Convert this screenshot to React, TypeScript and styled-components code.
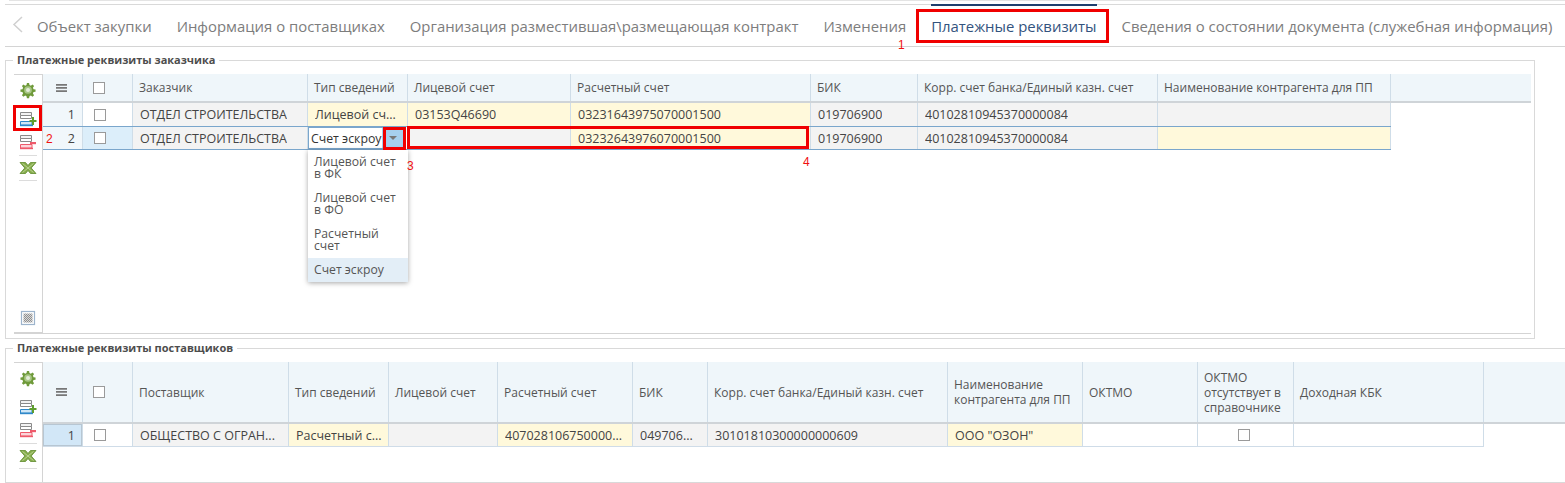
import styled, { createGlobalStyle } from "styled-components";

const GlobalStyle = createGlobalStyle`
  html, body {
    margin: 0;
    padding: 0;
    background: #fff;
    overflow: hidden;
  }
  body {
    font-family: "Open Sans", "Noto Sans", sans-serif;
    color: #444;
  }
`;

const Page = styled.div`
  position: relative;
  width: 1565px;
  height: 483px;
  overflow: hidden;
`;

const TopRule = styled.div`
  height: 4px;
  margin-left: 5px;
  border-bottom: 1px solid #d9d9d9;

  &::before {
    content: "";
    display: block;
    height: 1px;
    margin-left: 4px;
    background: #e4e4e4;
  }
`;

const TabBar = styled.div`
  display: flex;
  align-items: center;
  height: 41px;
  margin-left: 5px;
  padding-left: 7px;
  border-bottom: 1px solid #d4d4d4;
`;

const Chevron = styled.svg`
  flex: none;
  width: 12px;
  height: 17px;
  margin-right: 13px;
  margin-top: -2px;
`;

const Tab = styled.div<{ $active?: boolean }>`
  position: relative;
  flex: none;
  margin-right: 25px;
  font-size: 14.9px;
  line-height: 20px;
  white-space: nowrap;
  color: ${(p) => (p.$active ? "#33537e" : "#7d7d7d")};

  &::before {
    content: "";
    display: ${(p) => (p.$active ? "block" : "none")};
    position: absolute;
    left: 0;
    right: 0;
    top: -12px;
    height: 2px;
    background: #1f3f6e;
  }
`;

const Section = styled.fieldset<{ $width: number; $height: number; $top: number; $flush?: boolean }>`
  box-sizing: border-box;
  width: ${(p) => p.$width}px;
  height: ${(p) => p.$height}px;
  margin: ${(p) => p.$top}px 0 0 5px;
  padding: 7px 3px ${(p) => (p.$flush ? 0 : 4)}px 8px;
  border: 1px solid #d9d9d9;
  min-width: 0;
`;

const Legend = styled.legend`
  margin-left: -1px;
  padding: 0 4px;
  font-size: 11px;
  line-height: 14px;
  font-weight: 700;
  color: #4d4d4d;
`;

const Panel = styled.div`
  display: flex;
  height: 100%;
`;

const Toolbar = styled.div<{ $flush?: boolean }>`
  box-sizing: border-box;
  flex: 0 0 29px;
  display: flex;
  flex-direction: column;
  align-items: center;
  padding: 5px 0 4px;
  border-top: 1px solid #d4d4d4;
  border-right: 1px solid #d4d4d4;
  border-bottom: ${(p) => (p.$flush ? "none" : "2px solid #d4d4d4")};
`;

const ToolIcon = styled.svg<{ $gap?: number }>`
  flex: 0 0 20px;
  display: block;
  width: 20px;
  height: 20px;
  margin-bottom: ${(p) => p.$gap ?? 3}px;
`;

const ToolDivider = styled.div`
  flex: 0 0 1px;
  width: 18px;
  margin-bottom: 2px;
  background: #dcdcdc;
`;

const ToolSpacer = styled.div`
  flex: 1;
`;

const GridArea = styled.div<{ $flush?: boolean }>`
  flex: 1;
  min-width: 0;
  border-bottom: ${(p) => (p.$flush ? "none" : "1px solid #d4d4d4")};
`;

const Row = styled.div<{ $cols: string; $height: number; $line?: string }>`
  display: grid;
  grid-template-columns: ${(p) => p.$cols};
  width: fit-content;
  height: ${(p) => p.$height}px;
  box-sizing: border-box;
  border-bottom: 1px solid ${(p) => p.$line ?? "#cfdce8"};
`;

const HeaderRow = styled(Row)`
  width: auto;
  border-bottom: 2px solid #cfd4d8;
  background: #eff6fa;
`;

const HeaderCell = styled.div<{ $center?: boolean; $pad?: number }>`
  box-sizing: border-box;
  display: flex;
  align-items: center;
  justify-content: ${(p) => (p.$center ? "center" : "flex-start")};
  padding: 0 3px 0 ${(p) => p.$pad ?? (p.$center ? 0 : 6)}px;
  border-right: 1px solid #cfdde8;
  font-size: 12px;
  line-height: 15px;
  color: #555;
  min-width: 0;
`;

const tones = {
  white: "#ffffff",
  gray: "#f3f3f3",
  yellow: "#fff9db",
  index: "#f1f7fb",
  selected: "#dceefa",
  current: "#d2e7f7",
};

type Tone = keyof typeof tones;

const Cell = styled.div<{ $tone: Tone; $number?: boolean; $center?: boolean; $pad?: number }>`
  box-sizing: border-box;
  display: flex;
  align-items: center;
  justify-content: ${(p) => (p.$number ? "flex-end" : p.$center ? "center" : "flex-start")};
  min-width: 0;
  padding: 0 ${(p) => (p.$number ? 7 : 3)}px 0 ${(p) => p.$pad ?? 7}px;
  border-right: 1px solid #cfdde8;
  background: ${(p) => tones[p.$tone]};
  box-shadow: ${(p) => (p.$tone === "current" ? "inset 0 0 0 1px #b7c6d2" : "none")};
  font-size: 12.5px;
  color: #444;
`;

const CellText = styled.span`
  overflow: hidden;
  white-space: nowrap;
  text-overflow: ellipsis;
`;

const Check = styled.span`
  display: block;
  flex: none;
  box-sizing: border-box;
  width: 12px;
  height: 12px;
  border: 1px solid #9a9a9a;
  background: #fff;
`;

const MenuGlyph = styled.svg`
  display: block;
  width: 11px;
  height: 8px;
`;

const Editor = styled.div`
  box-sizing: border-box;
  display: flex;
  align-items: center;
  width: 100%;
  height: 100%;
  padding-left: 2px;
  border: 1px solid #7aa6cc;
  background: #fff;
  font-size: 12.3px;
  color: #333;
`;

const EditorButton = styled.div`
  margin-left: auto;
  display: flex;
  align-items: center;
  justify-content: center;
  width: 21px;
  height: 100%;
  background: #a6d0ee;

  &::after {
    content: "";
    border-left: 4px solid transparent;
    border-right: 4px solid transparent;
    border-top: 4px solid #777;
  }
`;

const Dropdown = styled.div`
  position: absolute;
  left: 308px;
  top: 150px;
  width: 100px;
  background: #fff;
  box-shadow: 0 1px 5px rgba(0, 0, 0, 0.35);
`;

const DropdownItem = styled.div<{ $active?: boolean }>`
  box-sizing: border-box;
  display: flex;
  align-items: center;
  height: ${(p) => (p.$active ? 24 : 36)}px;
  padding: 0 6px;
  background: ${(p) => (p.$active ? "#e3eef7" : "#fff")};
  font-size: 12.2px;
  line-height: 12px;
  color: #555;
`;

const Callout = styled.div<{ $x: number; $y: number; $w: number; $h: number }>`
  position: absolute;
  box-sizing: border-box;
  left: ${(p) => p.$x}px;
  top: ${(p) => p.$y}px;
  width: ${(p) => p.$w}px;
  height: ${(p) => p.$h}px;
  border: 3px solid #f00000;
`;

const Mark = styled.div<{ $x: number; $y: number }>`
  position: absolute;
  left: ${(p) => p.$x}px;
  top: ${(p) => p.$y}px;
  font-family: "Liberation Sans", sans-serif;
  font-size: 12px;
  line-height: 14px;
  color: #f01010;
`;

const customerCols = "40px 50px 175px 100px 163px 240px 107px 240px 233px";
const supplierCols = "40px 50px 156px 100px 109px 135px 75px 240px 135px 115px 96px 190px";

const customerHead = [
  "Заказчик",
  "Тип сведений",
  "Лицевой счет",
  "Расчетный счет",
  "БИК",
  "Корр. счет банка/Единый казн. счет",
  "Наименование контрагента для ПП",
];

const supplierHead = [
  "Поставщик",
  "Тип сведений",
  "Лицевой счет",
  "Расчетный счет",
  "БИК",
  "Корр. счет банка/Единый казн. счет",
  "Наименование контрагента для ПП",
  "ОКТМО",
  "ОКТМО отсутствует в справочнике",
  "Доходная КБК",
];

const GearIcon = () => (
  <ToolIcon viewBox="-3 -3 26 26" $gap={9}>
    <path
      d="M8.600 1h2.800l.5 2.600 1.800.8 2.200-1.500 2 2-1.500 2.200.8 1.800 2.600.5v2.800l-2.600.5-.8 1.800 1.500 2.200-2 2-2.200-1.500-1.800.8-.5 2.600h-2.800l-.5-2.600-1.800-.8-2.200 1.500-2-2 1.500-2.200-.8-1.800-2.600-.5v-2.800l2.600-.5.8-1.800-1.500-2.200 2-2 2.200 1.500 1.800-.8z"
      fill="#6f9a3a"
    />
    <circle cx="10" cy="10" r="5" fill="#a9c787" />
    <circle cx="10" cy="10" r="2.600" fill="#e4edd8" />
  </ToolIcon>
);

const RowsIcon = ({ remove }: { remove?: boolean }) => {
  const accent = remove ? "#ee5a6b" : "#2f88c9";
  const tint = remove ? "#fbd5da" : "#cfe6f6";
  return (
    <ToolIcon viewBox="0 0 20 20">
      <path d="M2.500 3.500h11v3h-11z" fill="#f2f2f2" stroke="#8a8a8a" />
      <path d="M2.500 6.500h11v3h-11z" fill="#fff" stroke="#8a8a8a" />
      <path d="M2.500 12.500h11.500v3.500h-11.500z" fill={tint} stroke={accent} />
      <path d="M2 16.500h13" stroke={accent} strokeWidth="1.400" />
      {remove ? (
        <path d="M12 10h6v2.200h-6z" fill={accent} />
      ) : (
        <path d="M14 8h2v3h2.500v2H16v3h-2v-3h-2.500v-2H14z" fill="#5f9e2e" />
      )}
    </ToolIcon>
  );
};

const ExcelIcon = () => (
  <ToolIcon viewBox="0 0 20 20" $gap={2}>
    <path
      d="M2 4.500h5.500L10 7.500l2.500-3H18l-4.800 5.500 4.800 5.500h-5.500L10 12.500l-2.500 3H2L6.800 10z"
      fill="#86ad4b"
      stroke="#5f8a2e"
      strokeWidth="0.800"
    />
    <path d="M4.500 5.500l11 9M15.500 5.500l-11 9" stroke="#cfe0b2" strokeWidth="0.700" />
  </ToolIcon>
);

const SheetIcon = () => (
  <ToolIcon viewBox="0 0 20 20" $gap={0}>
    <defs>
      <pattern id="sheet-dots" width="2" height="2" patternUnits="userSpaceOnUse">
        <rect width="2" height="2" fill="#d8d8d8" />
        <rect width="1" height="1" fill="#8f8f8f" />
        <rect x="1" y="1" width="1" height="1" fill="#8f8f8f" />
      </pattern>
    </defs>
    <rect x="3.500" y="3.500" width="13" height="13" fill="#fff" stroke="#9db4cc" strokeWidth="1.200" />
    <rect x="5.500" y="5.500" width="9" height="9" fill="url(#sheet-dots)" />
  </ToolIcon>
);

const Menu = () => (
  <MenuGlyph viewBox="0 0 11 8">
    <path d="M0 0h11v1.700H0zM0 3.100h11v1.700H0zM0 6.200h11v1.700H0z" fill="#777" />
  </MenuGlyph>
);

const tabs = [
  "Объект закупки",
  "Информация о поставщиках",
  "Организация разместившая\\размещающая контракт",
  "Изменения",
  "Платежные реквизиты",
  "Сведения о состоянии документа (служебная информация)",
];

const TextCell = ({ tone, text, pad }: { tone: Tone; text?: string; pad?: number }) => (
  <Cell $tone={tone} $pad={pad}>
    <CellText>{text}</CellText>
  </Cell>
);

export default function App() {
  return (
    <Page>
      <GlobalStyle />
      <TopRule />
      <TabBar>
        <Chevron viewBox="0 0 12 17">
          <path d="M10 1L2 8.500l8 7.500" fill="none" stroke="#d0d0d0" strokeWidth="1.500" />
        </Chevron>
        {tabs.map((t, i) => (
          <Tab key={t} $active={i === 4}>
            {t}
          </Tab>
        ))}
      </TabBar>

      <Section $width={1530} $height={286} $top={6}>
        <Legend>Платежные реквизиты заказчика</Legend>
        <Panel>
          <Toolbar>
            <GearIcon />
            <RowsIcon />
            <RowsIcon remove />
            <ToolDivider />
            <ExcelIcon />
            <ToolDivider />
            <ToolSpacer />
            <SheetIcon />
          </Toolbar>
          <GridArea>
            <HeaderRow $cols={`${customerCols} 1fr`} $height={29}>
              <HeaderCell $center>
                <Menu />
              </HeaderCell>
              <HeaderCell $pad={10}>
                <Check />
              </HeaderCell>
              {customerHead.map((h) => (
                <HeaderCell key={h}>{h}</HeaderCell>
              ))}
              <span />
            </HeaderRow>
            <Row $cols={customerCols} $height={24} $line="#7aa6cc">
              <Cell $tone="index" $number>1</Cell>
              <Cell $tone="white" $pad={11}><Check /></Cell>
              <TextCell tone="gray" text="ОТДЕЛ СТРОИТЕЛЬСТВА" />
              <TextCell tone="yellow" text="Лицевой сч..." />
              <TextCell tone="yellow" text="03153Q46690" />
              <TextCell tone="yellow" text="03231643975070001500" />
              <TextCell tone="gray" text="019706900" />
              <TextCell tone="gray" text="40102810945370000084" />
              <TextCell tone="gray" />
            </Row>
            <Row $cols={customerCols} $height={23} $line="#7aa6cc">
              <Cell $tone="index" $number>2</Cell>
              <Cell $tone="selected" $pad={11}><Check /></Cell>
              <TextCell tone="gray" text="ОТДЕЛ СТРОИТЕЛЬСТВА" />
              <Cell $tone="white" $pad={0}>
                <Editor>
                  Счет эскроу
                  <EditorButton />
                </Editor>
              </Cell>
              <TextCell tone="gray" />
              <TextCell tone="yellow" text="03232643976070001500" />
              <TextCell tone="gray" text="019706900" />
              <TextCell tone="gray" text="40102810945370000084" />
              <TextCell tone="yellow" />
            </Row>
          </GridArea>
        </Panel>
      </Section>

      <Section $width={1565} $height={142} $top={2} $flush>
        <Legend>Платежные реквизиты поставщиков</Legend>
        <Panel>
          <Toolbar $flush>
            <GearIcon />
            <RowsIcon />
            <RowsIcon remove />
            <ToolDivider />
            <ExcelIcon />
            <ToolDivider />
          </Toolbar>
          <GridArea $flush>
            <HeaderRow $cols={`${supplierCols} 1fr`} $height={62}>
              <HeaderCell $center>
                <Menu />
              </HeaderCell>
              <HeaderCell $pad={10}>
                <Check />
              </HeaderCell>
              {supplierHead.map((h) => (
                <HeaderCell key={h}>{h}</HeaderCell>
              ))}
              <span />
            </HeaderRow>
            <Row $cols={supplierCols} $height={23}>
              <Cell $tone="current" $number>1</Cell>
              <Cell $tone="white" $pad={11}><Check /></Cell>
              <TextCell tone="gray" text="ОБЩЕСТВО С ОГРАН..." />
              <TextCell tone="yellow" text="Расчетный с..." />
              <TextCell tone="gray" />
              <TextCell tone="yellow" text="407028106750000..." />
              <TextCell tone="gray" text="049706..." />
              <TextCell tone="gray" text="30101810300000000609" />
              <TextCell tone="yellow" text={'ООО "ОЗОН"'} />
              <TextCell tone="white" />
              <Cell $tone="white" $center $pad={0}><Check /></Cell>
              <TextCell tone="white" />
            </Row>
          </GridArea>
        </Panel>
      </Section>

      <Dropdown>
        <DropdownItem>Лицевой счет<br />в ФК</DropdownItem>
        <DropdownItem>Лицевой счет<br />в ФО</DropdownItem>
        <DropdownItem>Расчетный<br />счет</DropdownItem>
        <DropdownItem $active>Счет эскроу</DropdownItem>
      </Dropdown>

      <Callout $x={916} $y={9} $w={193} $h={34} />
      <Callout $x={13} $y={105} $w={29} $h={26} />
      <Callout $x={383} $y={127} $w={23} $h={23} />
      <Callout $x={407} $y={126} $w={402} $h={23} />
      <Mark $x={898} $y={38}>1</Mark>
      <Mark $x={46} $y={132}>2</Mark>
      <Mark $x={407} $y={159}>3</Mark>
      <Mark $x={803} $y={155}>4</Mark>
    </Page>
  );
}
